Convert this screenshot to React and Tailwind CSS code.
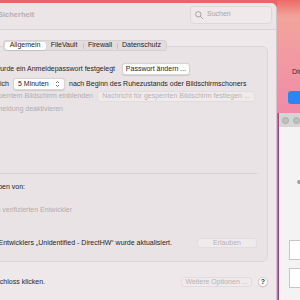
import React from 'react';

function Knopf({ children, disabled = false, className = '' }) {
  return (
    <div
      className={`flex shrink-0 items-center justify-center whitespace-nowrap rounded-[3px] text-[7px] ${
        disabled
          ? 'border border-[#e2dcde] bg-[#efeaec] text-[#b8b2b4]'
          : 'border border-[#d9d3d5] bg-white text-[#262626] shadow-[0_0.5px_1px_rgba(0,0,0,0.12)]'
      } ${className}`}
    >
      {children}
    </div>
  );
}

// Beschriftung, die rechtsbündig endet und links vom Fenster abgeschnitten wird
function Label({ children, className = '', grau = false }) {
  return (
    <div className={`flex shrink-0 justify-end ${className}`}>
      <span className={`whitespace-nowrap ${grau ? 'text-[#b3adaf]' : ''}`}>{children}</span>
    </div>
  );
}

export default function App() {
  return (
    <div className="flex h-[300px] w-[300px] overflow-hidden bg-[#ec6468] font-['Liberation_Sans',Arial,sans-serif] text-[7px] text-[#262626]">
      {/* Hauptfenster */}
      <div className="mt-[3px] flex w-[277px] shrink-0 flex-col overflow-hidden rounded-tr-[6px] border-r border-[#cdc5c9] bg-[#eee8ea]">
        <div className="flex h-[27px] shrink-0 items-center border-b border-[#d8d2d4] bg-[#ebe5e7] pb-[3px]">
          <span className="-ml-[2px] text-[7.5px] font-bold text-[#b5afb1]">Sicherheit</span>
          <div className="ml-auto mr-[4px] flex h-[18px] w-[82px] items-center gap-[4px] rounded-[4px] border border-[#ddd7d9] bg-[#efe9eb] px-[4px] text-[#aaa4a6]">
            <svg width="8" height="8" viewBox="0 0 8 8" fill="none" stroke="#9e989a" strokeWidth="0.9">
              <circle cx="3.3" cy="3.3" r="2.7" />
              <path d="M5.3 5.3 L7.6 7.6" strokeLinecap="round" />
            </svg>
            <span>Suchen</span>
          </div>
        </div>

        <div className="flex flex-1 flex-col pt-[10px]">
          {/* Tabs */}
          <div className="relative z-10 -mb-[5px] ml-[3px] flex h-[11px] w-[164px] items-center rounded-[3px] border border-[#d6d0d2] bg-[#e2dcde] p-[0.5px]">
            <div className="flex h-full w-[41px] items-center justify-center rounded-[2.5px] bg-white shadow-[0_0.5px_1px_rgba(0,0,0,0.15)]">Allgemein</div>
            <div className="flex h-full w-[37px] items-center justify-center">FileVault</div>
            <div className="h-[6px] w-px bg-[#c9c3c5]" />
            <div className="flex h-full w-[33px] items-center justify-center">Firewall</div>
            <div className="h-[6px] w-px bg-[#c9c3c5]" />
            <div className="flex h-full flex-1 items-center justify-center">Datenschutz</div>
          </div>

          {/* Gruppe */}
          <div className="-ml-[10px] flex w-[278px] flex-col rounded-[6px] border border-[#dcd6d8] bg-[#e9e3e5] pb-[13px] pt-[16px]">
            <div className="flex h-[12px] items-center">
              <Label className="w-[124px]">Für diesen Benutzer wurde ein Anmeldepasswort festgelegt</Label>
              <Knopf className="ml-[7px] h-[12px] w-[68px]">Passwort ändern ...</Knopf>
            </div>
            <div className="mt-[3px] flex h-[12px] items-center">
              <Label className="w-[18px]">Passwort erforderlich</Label>
              <Knopf className="ml-[4px] h-[12px] w-[52px] !justify-between px-[4px]">
                <span>5 Minuten</span>
                <svg width="5" height="8" viewBox="0 0 5 8" fill="none" stroke="#555" strokeWidth="0.8">
                  <path d="M1 3 L2.5 1.5 L4 3" />
                  <path d="M1 5 L2.5 6.5 L4 5" />
                </svg>
              </Knopf>
              <span className="ml-[4px] whitespace-nowrap">nach Beginn des Ruhezustands oder Bildschirmschoners</span>
            </div>
            <div className="mt-[1px] flex h-[11px] items-center">
              <Label className="w-[102px]" grau>Mitteilung bei gesperrtem Bildschirm einblenden</Label>
              <Knopf disabled className="ml-[4px] h-[11px] w-[158px]">Nachricht für gesperrten Bildschirm festlegen ...</Knopf>
            </div>
            <div className="mt-[2px] flex h-[10px] items-center">
              <Label className="w-[72px]" grau>Automatische Anmeldung deaktivieren</Label>
            </div>

            <div className="mt-[59px] h-px w-[266px] bg-[#d7d1d3]" />

            <div className="mt-[8px] flex h-[10px] items-center">
              <Label className="w-[34px]">Apps-Download erlauben von:</Label>
            </div>
            <div className="mt-[13px] flex h-[10px] items-center">
              <Label className="w-[81px]" grau>App Store und verifizierten Entwickler</Label>
            </div>
            <div className="mt-[23px] flex h-[10px] items-center">
              <Label className="w-[181px]">Das Laden der Systemsoftware des Entwicklers „Unidentified - DirectHW“ wurde aktualisiert.</Label>
              <Knopf disabled className="ml-[25px] h-[10px] w-[60px]">Erlauben</Knopf>
            </div>
          </div>

          <div className="mt-[15px] flex h-[10px] items-center">
            <Label className="w-[45px]">Zum Ändern auf das Schloss klicken.</Label>
            <Knopf disabled className="ml-[136px] h-[10px] w-[71px]">Weitere Optionen ...</Knopf>
            <div className="ml-[6px] flex h-[10px] w-[10px] items-center justify-center rounded-full border border-[#d6d0d2] bg-white text-[7px] font-bold text-[#333] shadow-[0_0.5px_1px_rgba(0,0,0,0.15)]">?</div>
          </div>
        </div>
      </div>

      {/* rechts: Hintergrund und zweites Fenster */}
      <div className="flex flex-1 flex-col">
        <div className="flex h-[113px] shrink-0 flex-col bg-linear-to-b from-[#ec6a6a] from-0% via-[#f2a49c] via-15% to-[#f18aa8] to-100%">
          <span className="ml-[15px] mt-[67px] h-[10px] leading-[10px] text-[#3a2a2c]">Dir</span>
          <div className="ml-[11px] mt-[14px] h-[13px] w-[20px] rounded-l-[3px] bg-[#2b86f4]" />
        </div>
        <div className="ml-[1px] flex flex-1 flex-col border-l-[1.5px] border-[#a3457a] bg-[#f3f3f3]">
          <div className="flex h-[14px] shrink-0 items-center gap-[4px] bg-[#d5d5d5] pl-[3px]">
            <div className="h-[7px] w-[7px] shrink-0 rounded-full border border-[#aaaaaa] bg-[#c0c0c0]" />
            <div className="h-[7px] w-[7px] shrink-0 rounded-full border border-[#aaaaaa] bg-[#c0c0c0]" />
          </div>
          <div className="ml-[18px] mt-[53px] h-[4px] w-[4px] rounded-full bg-[#a0a0a0]" />
          <div className="ml-[10px] mt-[56px] h-[20px] w-[14px] border border-[#c6c6c6] bg-white" />
          <div className="ml-[10px] mt-[8px] h-[20px] w-[14px] border border-[#c6c6c6] bg-white" />
        </div>
      </div>
    </div>
  );
}
